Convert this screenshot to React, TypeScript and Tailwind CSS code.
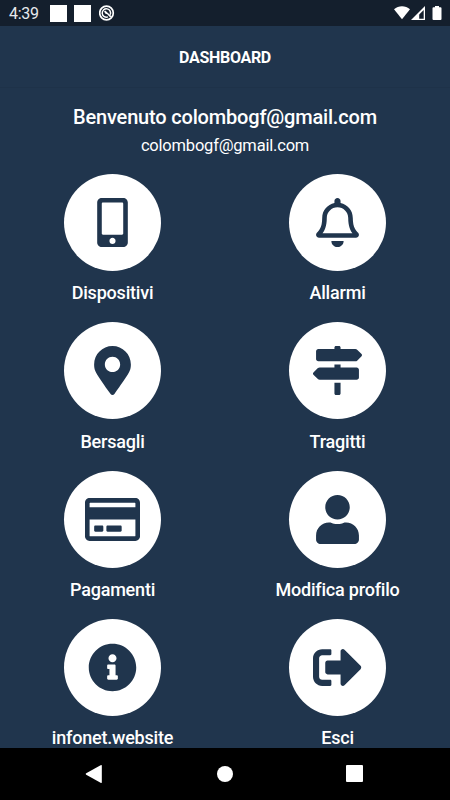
import React from 'react';
import {
  FaMobileAlt, FaRegBell, FaMapMarkerAlt, FaMapSigns,
  FaRegCreditCard, FaUser, FaInfoCircle, FaSignOutAlt
} from 'react-icons/fa';

const menuItems = [
  { label: 'Dispositivi', icon: FaMobileAlt },
  { label: 'Allarmi', icon: FaRegBell },
  { label: 'Bersagli', icon: FaMapMarkerAlt },
  { label: 'Tragitti', icon: FaMapSigns },
  { label: 'Pagamenti', icon: FaRegCreditCard },
  { label: 'Modifica profilo', icon: FaUser },
  { label: 'infonet.website', icon: FaInfoCircle },
  { label: 'Esci', icon: FaSignOutAlt }
];

const StatusBar = () => (
  <div className="flex h-[26px] shrink-0 items-center bg-[#141f2d] pl-[9px] pr-2 text-white">
    <span className="w-[41px] pt-px text-[16px] leading-none tracking-[-0.3px] text-[#e8eaed]">4:39</span>
    <div className="mt-px size-[17px] bg-white" />
    <div className="ml-[7px] mt-px size-[17px] bg-white" />
    {/* Crossed dial notification */}
    <svg className="ml-[8px] size-4" viewBox="0 0 16 16" fill="none" stroke="currentColor">
      <circle cx="7.5" cy="8" r="6.800" strokeWidth="1.700" />
      <path d="M11.200 9.800A4.200 4.200 0 1 0 9 11.900" strokeWidth="1.500" />
      <path d="M5 6.500 6.200 5.500 12.500 11.300 11.200 12.600 8.200 9.300 6.500 8.700z" fill="currentColor" stroke="none" />
    </svg>
    <svg className="ml-auto h-[14px] w-4" viewBox="0 0 16 14" fill="currentColor">
      <path d="M0 3.300C4.500-.8 11.500-.8 16 3.300L8 13.300z" />
    </svg>
    <svg className="ml-px h-[14px] w-[14px]" viewBox="0 0 14 14">
      <path d="M14 0v14H0z" fill="currentColor" />
      <path d="M12.700 4v8.700H8.200V8.500z" fill="#141f2d" />
    </svg>
    <svg className="ml-[7px] h-[14px] w-[10px]" viewBox="0 0 10 14" fill="currentColor">
      <path d="M3 0h4v1.300h1.500a1 1 0 0 1 1 1V13a1 1 0 0 1-1 1h-7a1 1 0 0 1-1-1V2.300a1 1 0 0 1 1-1H3z" />
    </svg>
  </div>
);

const NavigationBar = () => (
  <div className="flex h-[52.500px] shrink-0 items-center bg-black pl-[85px] text-white">
    <svg className="h-5 w-[17px]" viewBox="0 0 17 20" fill="currentColor">
      <path d="M1.200 9.300 15.600 1.200q1.200-.6 1.200.6v16.400q0 1.200-1.200.6L1.200 10.700q-1.200-.7 0-1.400z" />
    </svg>
    <div className="ml-[115px] size-4 rounded-full bg-white" />
    <div className="ml-[113px] size-[17px] rounded-[1px] bg-white" />
  </div>
);

const App = () => {
  return (
    <div className="flex h-[800px] w-[450px] flex-col overflow-hidden bg-[#20354d] font-['Roboto',sans-serif] text-white">
      <StatusBar />

      {/* Header */}
      <header className="flex h-[62px] shrink-0 items-center justify-center border-b border-[#1e3249] pt-[2px]">
        <h1 className="text-[16px] font-bold leading-5 tracking-[-0.3px]">DASHBOARD</h1>
      </header>

      <main className="min-h-0 flex-1 overflow-hidden">
        {/* Welcome */}
        <div className="h-[86px] pt-[15px] text-center">
          <h2 className="text-[20px] font-medium leading-7 tracking-[-0.18px]">Benvenuto colombogf@gmail.com</h2>
          <p className="text-[16.500px] leading-[30px] tracking-[-0.2px]">colombogf@gmail.com</p>
        </div>

        {/* Menu */}
        <div className="grid grid-cols-2">
          {menuItems.map((item) => (
            <button key={item.label} className="flex h-[148.400px] flex-col items-center">
              <span className="flex size-[97px] items-center justify-center rounded-full bg-white text-[#20354d]">
                <item.icon className="h-[49px] w-[55px]" />
              </span>
              <span className="mt-[10.300px] text-[18px] font-medium leading-6 tracking-[-0.2px]">{item.label}</span>
            </button>
          ))}
        </div>
      </main>

      <NavigationBar />
    </div>
  );
};

export default App;
